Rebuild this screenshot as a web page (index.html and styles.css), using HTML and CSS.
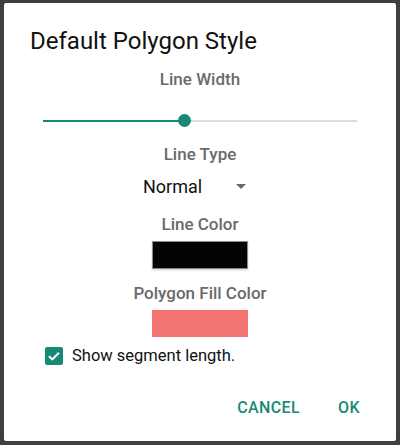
FILE: index.html
```html
<!DOCTYPE html>
<html lang="en">
<head>
    <meta charset="UTF-8">
    <meta name="viewport" content="width=device-width, initial-scale=1.0">
    <title>Default Polygon Style</title>
    <link rel="stylesheet" href="styles.css">
</head>
<body>
    <div class="dialog">
        <h1 class="dialog-title">Default Polygon Style</h1>

        <div class="field-label label-width">Line Width</div>
        <div class="slider">
            <div class="slider-track"></div>
            <div class="slider-fill" style="width: 141px;"></div>
            <div class="slider-thumb" style="left: 141px;"></div>
        </div>

        <div class="field-label label-type">Line Type</div>
        <div class="select-row">
            <span class="select-value">Normal</span>
            <span class="select-arrow"></span>
        </div>

        <div class="field-label label-color">Line Color</div>
        <div class="swatch swatch-line"></div>

        <div class="field-label label-fill">Polygon Fill Color</div>
        <div class="swatch swatch-fill"></div>

        <label class="check-row">
            <span class="check-box">
                <svg width="18" height="18" viewBox="0 0 18 18">
                    <path d="M4 9.2 L7.3 12.4 L14 5.7" fill="none" stroke="#fff" stroke-width="2"/>
                </svg>
            </span>
            <span class="check-text">Show segment length.</span>
        </label>

        <div class="dialog-actions">
            <a href="#" class="btn-text">CANCEL</a>
            <a href="#" class="btn-text">OK</a>
        </div>
    </div>
</body>
</html>
```

FILE: styles.css
```css
body {
    margin: 0;
    padding: 3px 4px;
    background-color: #3f3f3f;
    font-family: Roboto, "Noto Sans", sans-serif;
}

.dialog {
    width: 392px;
    height: 438px;
    box-sizing: border-box;
    background-color: #fff;
    border-radius: 2px;
    padding-top: 24px;
}

.dialog-title {
    margin: 0;
    padding-left: 26px;
    font-size: 24px;
    font-weight: 400;
    line-height: 28px;
    color: #111;
}

.field-label {
    text-align: center;
    font-size: 17px;
    font-weight: 500;
    line-height: 20px;
    color: #6a6a6a;
}

.label-width {
    margin-top: 14px;
}

.slider {
    position: relative;
    height: 20px;
    margin: 22px 0 0 39px;
    width: 314px;
}

.slider-track {
    position: absolute;
    left: 0;
    right: 0;
    top: 9px;
    height: 2px;
    background-color: #dcdcdc;
}

.slider-fill {
    position: absolute;
    left: 0;
    top: 9px;
    height: 2px;
    background-color: #178a76;
}

.slider-thumb {
    position: absolute;
    top: 3px;
    width: 13px;
    height: 13px;
    margin-left: -6px;
    border-radius: 50%;
    background-color: #178a76;
}

.label-type {
    margin-top: 13px;
}

.select-row {
    display: flex;
    align-items: center;
    margin: 11px 0 0 139px;
    height: 24px;
}

.select-value {
    font-size: 18px;
    line-height: 24px;
    color: #111;
    width: 93px;
}

.select-arrow {
    width: 0;
    height: 0;
    border-left: 5px solid transparent;
    border-right: 5px solid transparent;
    border-top: 5px solid #6a6a6a;
    margin-top: -1px;
}

.label-color {
    margin-top: 15px;
}

.swatch {
    width: 96px;
    height: 28px;
    box-sizing: border-box;
    margin: 7px auto 0 auto;
}

.swatch-line {
    background-color: #030303;
    border: 1px solid #8a8a8a;
    box-shadow: 0 1px 2px rgba(0, 0, 0, 0.2);
}

.label-fill {
    margin-top: 14px;
}

.swatch-fill {
    background-color: #f27470;
    height: 27px;
}

.check-row {
    display: flex;
    align-items: center;
    margin: 10px 0 0 41px;
    height: 18px;
}

.check-box {
    width: 18px;
    height: 18px;
    border-radius: 2px;
    background-color: #178a76;
    margin-right: 9px;
}

.check-box svg {
    display: block;
}

.check-text {
    font-size: 16.5px;
    line-height: 20px;
    color: #111;
}

.dialog-actions {
    display: flex;
    justify-content: flex-end;
    gap: 38px;
    margin-top: 33px;
    padding-right: 36px;
}

.btn-text {
    font-size: 16px;
    font-weight: 500;
    line-height: 20px;
    color: #178a76;
    text-decoration: none;
    letter-spacing: 0.4px;
}
```
